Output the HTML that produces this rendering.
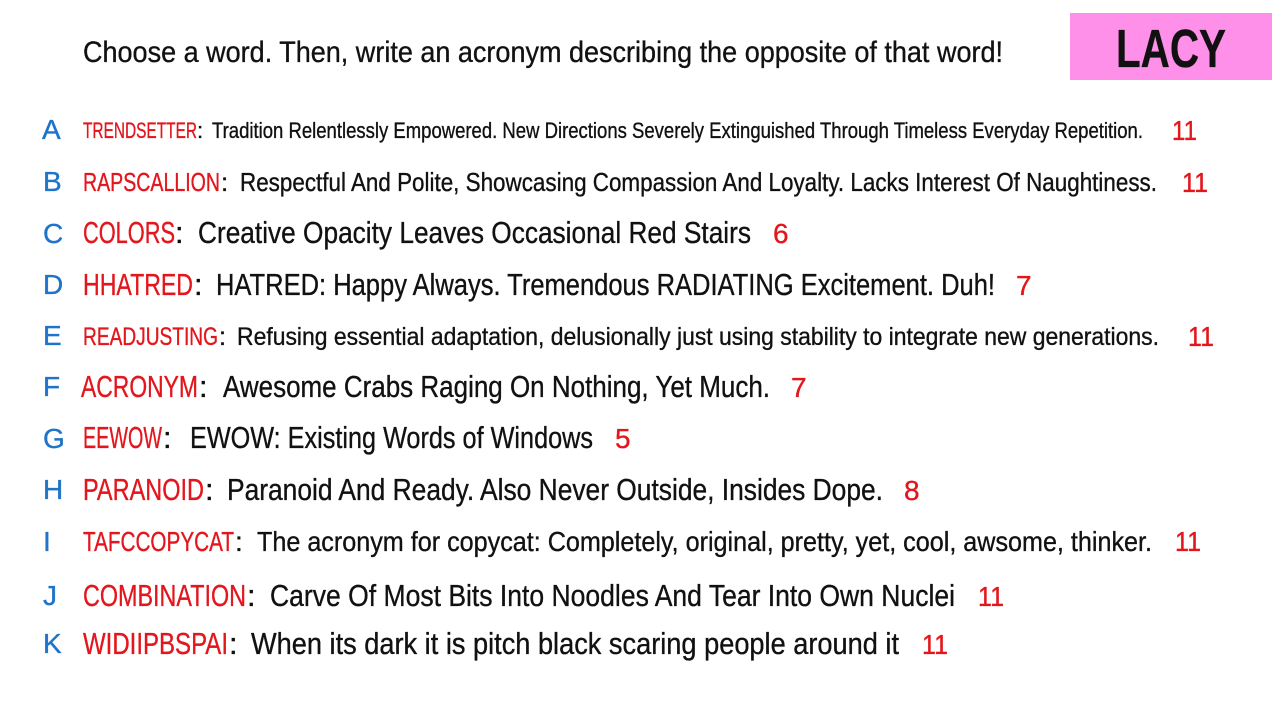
<!DOCTYPE html>
<html><head><meta charset="utf-8"><style>
html,body{margin:0;padding:0;background:#fff;width:1280px;height:720px;overflow:hidden}
svg{display:block}
text{font-family:"Liberation Sans Narrow","Liberation Sans",sans-serif;stroke-width:0.35px}
.r{fill:#e3161d;stroke:#e3161d}.b{fill:#1f74c9;stroke:#1f74c9}.k{fill:#111;stroke:#111}
</style></head><body>
<svg width="1280" height="720" viewBox="0 0 1280 720">
<rect x="1070" y="13" width="202" height="67" fill="#ff90ea"/>
<text x="1116" y="67" font-size="54" font-weight="bold" class="k" textLength="110" lengthAdjust="spacingAndGlyphs">LACY</text>
<text x="83" y="62" font-size="30" class="k" textLength="920" lengthAdjust="spacingAndGlyphs">Choose a word. Then, write an acronym describing the opposite of that word!</text>

<g font-size="22">
<text x="42" y="139" font-size="28" class="b">A</text>
<text x="83" y="138" class="r" textLength="114" lengthAdjust="spacingAndGlyphs">TRENDSETTER</text><text x="197" y="138" class="k">:</text>
<text x="212" y="138" class="k" textLength="931" lengthAdjust="spacingAndGlyphs">Tradition Relentlessly Empowered. New Directions Severely Extinguished Through Timeless Everyday Repetition.</text>
<text x="1172" y="140" font-size="28" class="r" textLength="25" lengthAdjust="spacingAndGlyphs">11</text>
</g>
<g font-size="26">
<text x="43" y="191" font-size="28" class="b">B</text>
<text x="83" y="191" class="r" textLength="137" lengthAdjust="spacingAndGlyphs">RAPSCALLION</text><text x="221" y="191" class="k">:</text>
<text x="240" y="191" class="k" textLength="917" lengthAdjust="spacingAndGlyphs">Respectful And Polite, Showcasing Compassion And Loyalty. Lacks Interest Of Naughtiness.</text>
<text x="1182" y="192" font-size="28" class="r" textLength="26" lengthAdjust="spacingAndGlyphs">11</text>
</g>
<g font-size="31">
<text x="43" y="243" font-size="28" class="b">C</text>
<text x="83" y="243" class="r" textLength="92" lengthAdjust="spacingAndGlyphs">COLORS</text><text x="175" y="243" class="k">:</text>
<text x="198" y="243" class="k" textLength="553" lengthAdjust="spacingAndGlyphs">Creative Opacity Leaves Occasional Red Stairs</text>
<text x="773" y="243" font-size="28" class="r">6</text>

<text x="43" y="294" font-size="28" class="b">D</text>
<text x="83" y="295" class="r" textLength="110" lengthAdjust="spacingAndGlyphs">HHATRED</text><text x="194" y="295" class="k">:</text>
<text x="216" y="295" class="k" textLength="779" lengthAdjust="spacingAndGlyphs">HATRED: Happy Always. Tremendous RADIATING Excitement. Duh!</text>
<text x="1016" y="295" font-size="28" class="r">7</text>
</g>
<g font-size="25">
<text x="43" y="345" font-size="28" class="b">E</text>
<text x="83" y="345" class="r" textLength="135" lengthAdjust="spacingAndGlyphs">READJUSTING</text><text x="219" y="345" class="k">:</text>
<text x="237" y="345" class="k" textLength="922" lengthAdjust="spacingAndGlyphs">Refusing essential adaptation, delusionally just using stability to  integrate new generations.</text>
<text x="1188" y="346" font-size="28" class="r" textLength="26" lengthAdjust="spacingAndGlyphs">11</text>
</g>
<g font-size="31">
<text x="43" y="396" font-size="28" class="b">F</text>
<text x="81" y="397" class="r" textLength="117" lengthAdjust="spacingAndGlyphs">ACRONYM</text><text x="199" y="397" class="k">:</text>
<text x="223" y="397" class="k" textLength="547" lengthAdjust="spacingAndGlyphs">Awesome Crabs Raging On Nothing, Yet Much.</text>
<text x="791" y="397" font-size="28" class="r">7</text>

<text x="43" y="448" font-size="28" class="b">G</text>
<text x="83" y="448" class="r" textLength="79" lengthAdjust="spacingAndGlyphs">EEWOW</text><text x="163" y="448" class="k">:</text>
<text x="190" y="448" class="k" textLength="403" lengthAdjust="spacingAndGlyphs">EWOW: Existing Words of Windows</text>
<text x="615" y="448" font-size="28" class="r">5</text>

<text x="43" y="499" font-size="28" class="b">H</text>
<text x="83" y="500" class="r" textLength="121" lengthAdjust="spacingAndGlyphs">PARANOID</text><text x="205" y="500" class="k">:</text>
<text x="227" y="500" class="k" textLength="656" lengthAdjust="spacingAndGlyphs">Paranoid And Ready. Also Never Outside, Insides Dope.</text>
<text x="904" y="500" font-size="28" class="r">8</text>
</g>
<g font-size="28">
<text x="43" y="551" font-size="28" class="b">I</text>
<text x="83" y="551" class="r" textLength="151" lengthAdjust="spacingAndGlyphs">TAFCCOPYCAT</text><text x="235" y="551" class="k">:</text>
<text x="257" y="551" class="k" textLength="895" lengthAdjust="spacingAndGlyphs">The acronym for copycat: Completely, original, pretty, yet, cool, awsome, thinker.</text>
<text x="1175" y="551" class="r" textLength="26" lengthAdjust="spacingAndGlyphs">11</text>
</g>
<g font-size="31">
<text x="43" y="605" font-size="28" class="b">J</text>
<text x="83" y="606" class="r" textLength="163" lengthAdjust="spacingAndGlyphs">COMBINATION</text><text x="247" y="606" class="k">:</text>
<text x="270" y="606" class="k" textLength="685" lengthAdjust="spacingAndGlyphs">Carve Of Most Bits Into Noodles And Tear Into Own Nuclei</text>
<text x="978" y="606" font-size="28" class="r" textLength="26" lengthAdjust="spacingAndGlyphs">11</text>

<text x="43" y="653" font-size="28" class="b">K</text>
<text x="83" y="654" class="r" textLength="145" lengthAdjust="spacingAndGlyphs">WIDIIPBSPAI</text><text x="229" y="654" class="k">:</text>
<text x="251" y="654" class="k" textLength="648" lengthAdjust="spacingAndGlyphs">When its dark it is pitch black scaring people around it</text>
<text x="922" y="654" font-size="28" class="r" textLength="26" lengthAdjust="spacingAndGlyphs">11</text>
</g>
</svg>
</body></html>
